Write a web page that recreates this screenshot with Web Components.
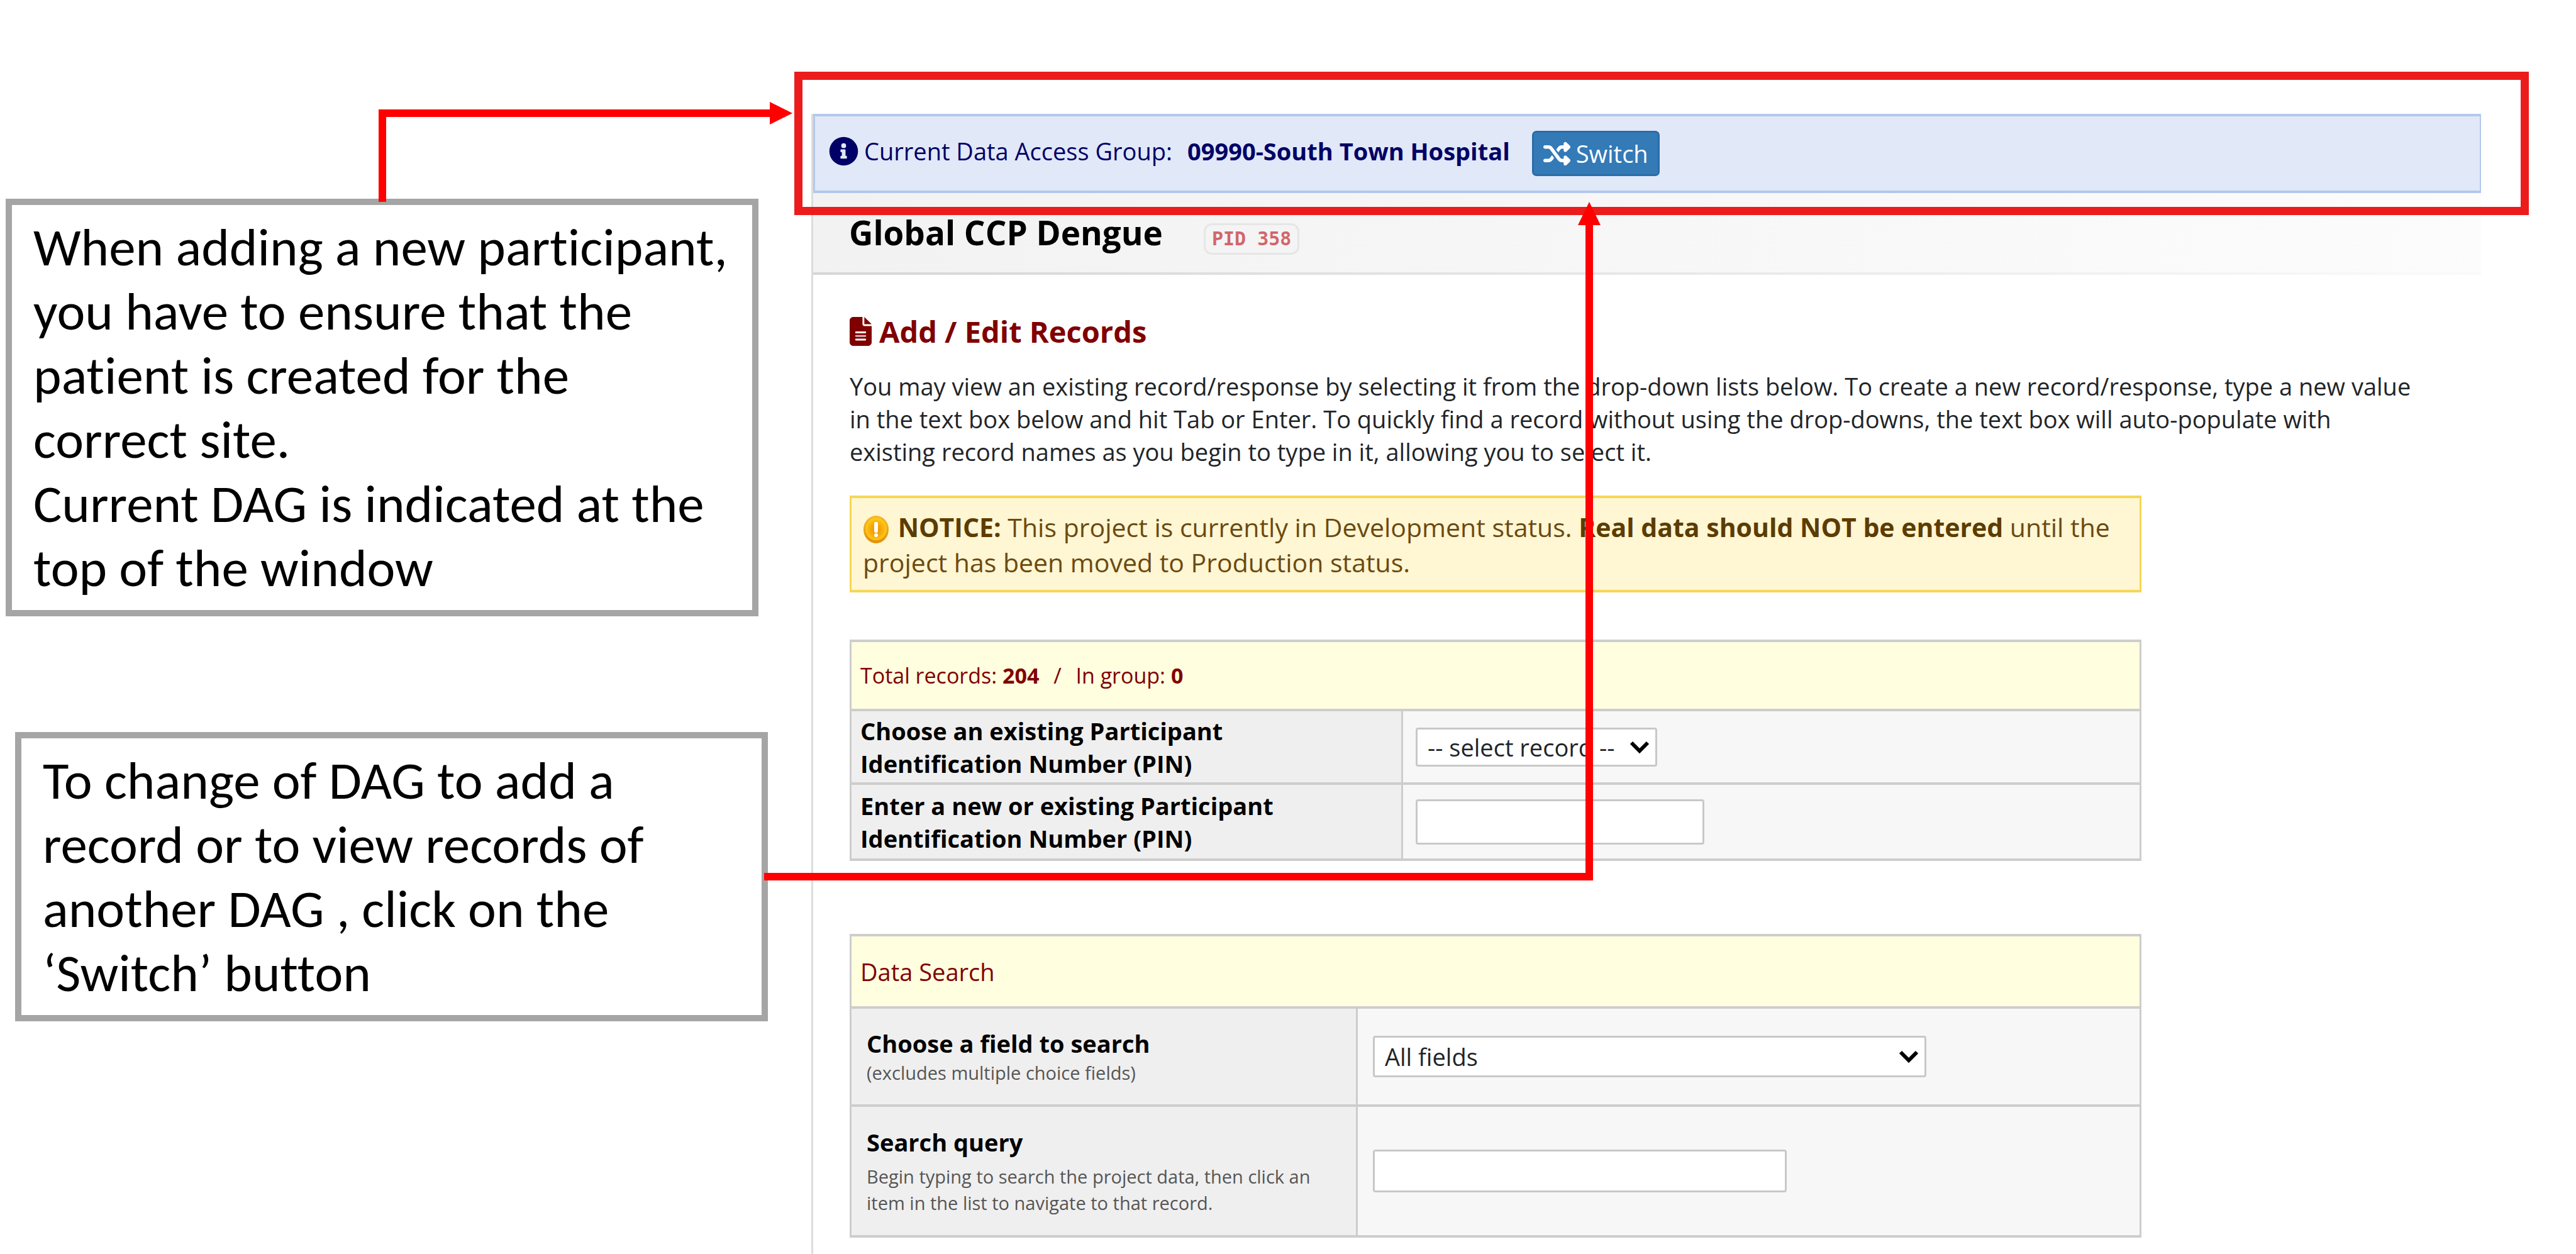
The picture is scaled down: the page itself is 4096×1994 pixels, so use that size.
<!DOCTYPE html>
<html lang="en">
<head>
<meta charset="utf-8">
<title>Add / Edit Records</title>
<style>
  body { margin: 0; background: #fff; color: #000; font-family: "Open Sans", "Noto Sans", sans-serif; }
</style>
</head>
<body>
<guide-page>
  <guide-callout slot="notes">When adding a new participant, you have to ensure that the patient is created for the<br>correct site.<br>Current DAG is indicated at the top of the window</guide-callout>
  <guide-callout slot="notes">To change of DAG to add a record or to view records of another DAG , click on the ‘Switch’ button</guide-callout>
  <dag-banner group="09990-South Town Hospital">Current Data Access Group:</dag-banner>
  <project-header pid="PID 358">Global CCP Dengue</project-header>
  <records-view>
    <page-intro heading="Add / Edit Records">You may view an existing record/response by selecting it from the drop-down lists below. To create a new record/response, type a new value in the text box below and hit Tab or Enter. To quickly find a record without using the drop-downs, the text box will auto-populate with existing record names as you begin to type in it, allowing you to select it.</page-intro>
    <status-notice></status-notice>
    <record-picker></record-picker>
    <data-search></data-search>
  </records-view>
</guide-page>

<script>
const define = (name, html, setup) => {
  const template = document.createElement('template');
  template.innerHTML = html;
  customElements.define(name, class extends HTMLElement {
    constructor() {
      super();
      this.attachShadow({ mode: 'open' }).append(template.content.cloneNode(true));
    }
    connectedCallback() { if (setup) setup(this, this.shadowRoot); }
  });
};

define('guide-page', `
  <style>
    :host { display: flex; position: relative; min-height: 100vh; box-sizing: border-box; padding-right: 151px; overflow: hidden; }
    aside { flex: none; width: 1212px; box-sizing: border-box; padding-top: 316px; margin-left: 9px; display: flex; flex-direction: column; gap: 184px; }
    ::slotted(guide-callout:nth-of-type(2)) { align-self: flex-end; }
    main { flex: 1; min-width: 0; margin: 181px 0 0 69px; border-left: 3px solid #dcdcdc; }
    .frame { position: absolute; left: 1263px; right: 75px; top: 114px; height: 228px; box-sizing: border-box; border: 13px solid #ec1c1c; pointer-events: none; }
    svg { position: absolute; inset: 0; width: 100%; height: 100%; pointer-events: none; }
  </style>
  <aside><slot name="notes"></slot></aside>
  <main><slot></slot></main>
  <div class="frame"></div>
  <svg aria-hidden="true" fill="none" stroke="#f00" stroke-width="12">
    <path d="M608 321V180H1226"/>
    <path d="M1224 162L1260 180L1224 198Z" fill="#f00" stroke="none"/>
    <path d="M1215 1394H2527V356"/>
    <path d="M2509 358L2527 321L2545 358Z" fill="#f00" stroke="none"/>
  </svg>`);

define('guide-callout', `
  <style>
    :host { display: block; box-sizing: border-box; width: 1197px; border: 10px solid #a5a5a5; background: #fff;
      padding: 16px 30px 16px 34px; font: 85px/102px Calibri, Carlito, Lato, sans-serif; font-variant-ligatures: none; }
  </style><slot></slot>`);

define('dag-banner', `
  <style>
    :host { display: flex; align-items: center; gap: 35px; height: 126px; box-sizing: border-box; padding-left: 22px;
      border: solid #b3c8ec; border-width: 4px 2px 4px 3px; background: #e1e8f8; color: #000066; font-size: 38px; line-height: 52px; }
    p { display: flex; align-items: center; margin: 0; padding-bottom: 8px; }
    p svg { width: 47px; height: 47px; margin-right: 9px; }
    strong { margin-left: 24px; }
    button { display: flex; align-items: center; gap: 9px; height: 72px; box-sizing: border-box; padding: 0 15px; border: 3px solid #2a6da8;
      border-radius: 7px; background: #337ab7; color: #fff; font: inherit; }
    button svg { width: 43px; height: 43px; }
  </style>
  <p>
    <svg viewBox="0 0 512 512" aria-hidden="true"><path fill="#000066" fill-rule="evenodd" d="M256 8a248 248 0 1 0 0 496a248 248 0 1 0 0-496zM256 118a42 42 0 1 1 0 84a42 42 0 1 1 0-84zM312 372a12 12 0 0 1-12 12h-88a12 12 0 0 1-12-12v-24a12 12 0 0 1 12-12h12v-64h-12a12 12 0 0 1-12-12v-24a12 12 0 0 1 12-12h64a12 12 0 0 1 12 12v100h12a12 12 0 0 1 12 12z"/></svg>
    <slot></slot><strong></strong>
  </p>
  <button type="button">
    <svg viewBox="0 0 512 512" aria-hidden="true"><path fill="#fff" d="M403.8 34.4c12-5 25.7-2.2 34.9 6.900l64 64c6 6 9.400 14.100 9.400 22.600s-3.400 16.600-9.400 22.600l-64 64c-9.200 9.200-22.900 11.900-34.900 6.900s-19.800-16.600-19.800-29.600V160H352c-10.100 0-19.600 4.700-25.600 12.800L284 229.300 244 176l31.200-41.600C293.300 110.200 321.800 96 352 96h32V64c0-12.900 7.800-24.600 19.800-29.600zM164 282.700L204 336l-31.200 41.600C154.700 401.800 126.200 416 96 416H32c-17.700 0-32-14.300-32-32s14.300-32 32-32H96c10.100 0 19.600-4.700 25.600-12.800L164 282.700zm274.600 188c-9.200 9.200-22.900 11.900-34.900 6.900s-19.800-16.600-19.800-29.600V416H352c-30.200 0-58.700-14.200-76.800-38.400L121.600 172.800c-6-8.100-15.500-12.800-25.600-12.800H32c-17.700 0-32-14.300-32-32s14.300-32 32-32H96c30.200 0 58.700 14.200 76.800 38.400L326.400 339.200c6 8.100 15.500 12.800 25.600 12.800h32V320c0-12.900 7.800-24.600 19.800-29.600s25.700-2.200 34.900 6.900l64 64c6 6 9.400 14.100 9.400 22.600s-3.400 16.600-9.400 22.600l-64 64z"/></svg>
    Switch
  </button>`, (el, root) => { root.querySelector('strong').textContent = el.getAttribute('group'); });

define('project-header', `
  <style>
    :host { display: flex; align-items: center; height: 130px; box-sizing: border-box; padding-left: 57px;
      background: linear-gradient(90deg, #f2f2f2, #fcfcfc); border-bottom: 4px solid; border-image: linear-gradient(90deg, #d6d6d6, #fafafa) 1; }
    div { display: flex; align-items: baseline; gap: 65px; }
    h1 { margin: 0; font-size: 53px; line-height: 72px; font-weight: 700; }
    span { box-sizing: border-box; height: 50px; padding: 0 10px; border: 3px solid #e6e6e6; border-radius: 13px; background: #f4f4f4;
      color: #d2666a; font: 700 30px/44px "DejaVu Sans Mono", monospace; }
  </style>
  <div><h1><slot></slot></h1><span></span></div>`, (el, root) => { root.querySelector('span').textContent = el.getAttribute('pid'); });

define('records-view', `
  <style>
    :host { display: block; padding: 60px 0 0 58px; }
    ::slotted(status-notice), ::slotted(record-picker), ::slotted(data-search) { max-width: 2054px; }
    ::slotted(status-notice) { margin-top: 44px; }
    ::slotted(record-picker) { margin-top: 75px; }
    ::slotted(data-search) { margin-top: 116px; }
  </style><slot></slot>`);

define('page-intro', `
  <style>
    :host { display: block; max-width: 2500px; }
    h2 { display: flex; align-items: center; gap: 12px; margin: 0 0 31px; color: #800000; font-size: 47px; line-height: 60px; }
    svg { width: 35px; height: 46px; }
    p { margin: 0; color: #212529; font-size: 38px; line-height: 52px; }
  </style>
  <h2><svg viewBox="0 0 384 512" preserveAspectRatio="none" aria-hidden="true"><path fill="#800000" d="M64 0C28.700 0 0 28.700 0 64V448c0 35.300 28.700 64 64 64H320c35.300 0 64-28.700 64-64V160H256c-17.700 0-32-14.300-32-32V0H64zM256 0V128H384L256 0z"/><path stroke="#fff" stroke-width="32" stroke-linecap="round" d="M112 272H272M112 400H272"/><path stroke="#d9b3b3" stroke-width="32" stroke-linecap="round" d="M112 336H272"/></svg><span></span></h2>
  <p><slot></slot></p>`, (el, root) => { root.querySelector('h2 span').textContent = el.getAttribute('heading'); });

define('status-notice', `
  <style>
    :host { display: block; box-sizing: border-box; padding: 18px 18px 16px; border: solid #f6d654; border-width: 4px 3px; background: #fff6d3;
      color: #6b4a10; font-size: 41px; line-height: 56px; }
    p { margin: 0; }
    b { color: #5c3c00; }
    svg { width: 42px; height: 44px; margin-right: 3px; vertical-align: -10px; }
  </style>
  <p><svg viewBox="0 0 42 44" aria-hidden="true">
    <defs><linearGradient id="rim" x1="0" y1="0" x2="0" y2="1"><stop offset="0" stop-color="#f7b824"/><stop offset="1" stop-color="#e0920a"/></linearGradient>
    <radialGradient id="core"><stop offset="0" stop-color="#f08c00"/><stop offset="1" stop-color="#fbbc10"/></radialGradient></defs>
    <ellipse cx="21" cy="22" rx="20" ry="22" fill="url(#rim)"/>
    <ellipse cx="21" cy="21" rx="17" ry="18" fill="#fcc419"/>
    <ellipse cx="21" cy="22" rx="14" ry="15" fill="url(#core)"/>
    <rect x="18" y="10" width="6" height="17" rx="2" fill="#fff"/><circle cx="21" cy="31" r="3" fill="#fff"/>
  </svg>
  <b>NOTICE:</b> This project is currently in Development status. <b>Real data should NOT be entered</b> until the project has been moved to Production status.</p>`);

const tableStyle = `
    :host { display: block; }
    table { width: 100%; border-collapse: collapse; table-layout: fixed; font-size: 38px; line-height: 52px; }
    th, td { border: solid #cdcdcd; border-width: 4px 3px; padding: 0 19px 0 14px; text-align: left; vertical-align: middle; }
    thead th { background: #ffffe0; color: #800000; font-weight: 400; }
    tbody th { background: #efefef; font-weight: 700; }
    td { background: #f7f7f7; }
    label { display: block; }
    .pick { display: inline-grid; vertical-align: middle; }
    .pick > * { grid-area: 1 / 1; }
    .pick svg { width: 32px; height: 20px; align-self: center; justify-self: end; margin-right: 12px; pointer-events: none; }
    select, input { box-sizing: border-box; display: block; margin: 0; border: 3px solid #c8c8c8; border-radius: 4px; background: #fff; color: #212529; font: inherit; }
    select { appearance: none; padding: 0 16px; width: 100%; }
`;
const chevron = '<svg viewBox="0 0 32 20" aria-hidden="true"><path d="M3 3L16 16L29 3" fill="none" stroke="#000" stroke-width="6"/></svg>';

define('record-picker', `
  <style>${tableStyle}
    thead tr { height: 110px; } .one { height: 117px; } .two { height: 121px; }
    thead th { font-size: 34px; }
    thead span { margin: 0 14px; }
    .name { width: 877px; }
    tbody td { padding-left: 20px; }
    select { width: 384px; height: 62px; } input { width: 459px; height: 72px; }
  </style>
  <table>
    <colgroup><col class="name"><col></colgroup>
    <thead><tr><th colspan="2">Total records: <b>204</b> <span>/</span> In group: <b>0</b></th></tr></thead>
    <tbody>
      <tr class="one"><th scope="row"><label for="existing">Choose an existing Participant<br>Identification Number (PIN)</label></th>
        <td><div class="pick"><select id="existing"><option>-- select record --</option></select>${chevron}</div></td></tr>
      <tr class="two"><th scope="row"><label for="pin">Enter a new or existing Participant<br>Identification Number (PIN)</label></th>
        <td><input id="pin" type="text"></td></tr>
    </tbody>
  </table>`);

define('data-search', `
  <style>${tableStyle}
    thead tr { height: 115px; } .one { height: 156px; } .two { height: 208px; }
    .name { width: 805px; }
    tbody th, tbody td { padding-left: 24px; }
    small { display: block; color: #555; font-size: 29px; line-height: 42px; font-weight: 400; }
    .two small { margin-top: 8px; }
    select { width: 880px; height: 66px; } input { width: 658px; height: 68px; }
  </style>
  <table>
    <colgroup><col class="name"><col></colgroup>
    <thead><tr><th colspan="2">Data Search</th></tr></thead>
    <tbody>
      <tr class="one"><th scope="row"><label for="field">Choose a field to search</label><small>(excludes multiple choice fields)</small></th>
        <td><div class="pick"><select id="field"><option>All fields</option></select>${chevron}</div></td></tr>
      <tr class="two"><th scope="row"><label for="query">Search query</label><small>Begin typing to search the project data, then click an item in the list to navigate to that record.</small></th>
        <td><input id="query" type="text"></td></tr>
    </tbody>
  </table>`);
</script>
</body>
</html>
